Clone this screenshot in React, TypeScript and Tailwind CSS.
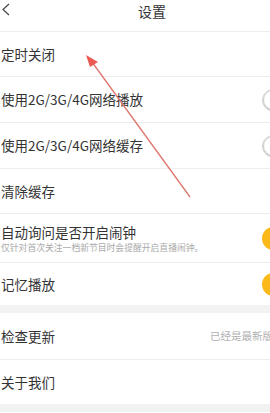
import React from 'react';

const font = { fontFamily: '"Noto Sans CJK SC", "Noto Sans", sans-serif' };

const OffSwitch: React.FC = () => (
  <div className="ml-auto -mr-[38px] flex h-[22px] w-[46px] shrink-0 items-center rounded-full border border-[#d9d9d9] bg-white">
    <div className="h-[20px] w-[20px] rounded-full border border-[#cfcfcf] bg-white shadow-[0_1px_2px_rgba(0,0,0,0.15)]" />
  </div>
);

const OnSwitch: React.FC = () => (
  <div className="ml-auto -mr-[38px] h-[23px] w-[46px] shrink-0 rounded-full bg-[#fbb917]" />
);

const Row: React.FC<{ h: string; children: React.ReactNode }> = ({ h, children }) => (
  <div className={`flex items-center border-b border-[#ededed] pl-[1px] ${h}`}>{children}</div>
);

export default function App() {
  return (
    <div className="relative h-[413px] w-[270px] overflow-hidden bg-white text-[#333]" style={font}>
      <div className="relative flex h-[32px] items-center border-b border-[#ededed]">
        <svg className="absolute left-[1px] top-[3px]" width="10" height="13" viewBox="0 0 10 13">
          <path d="M8 1 L2 6.5 L8 12" fill="none" stroke="#444" strokeWidth="1.2" />
        </svg>
        <div className="absolute left-[138px] top-[1px] text-[14px] leading-[20px] text-[#333]">设置</div>
      </div>

      <Row h="h-[45px]">
        <span className="text-[13.5px]">定时关闭</span>
      </Row>
      <Row h="h-[46px]">
        <span className="text-[13.5px]">使用2G/3G/4G网络播放</span>
        <OffSwitch />
      </Row>
      <Row h="h-[46px]">
        <span className="text-[13.5px]">使用2G/3G/4G网络缓存</span>
        <OffSwitch />
      </Row>
      <Row h="h-[45px]">
        <span className="text-[13.5px]">清除缓存</span>
      </Row>
      <Row h="h-[49px]">
        <div className="flex flex-col">
          <span className="text-[13.5px] leading-[18px]">自动询问是否开启闹钟</span>
          <span className="mt-[1px] text-[8.8px] leading-[12px] text-[#aaa]">仅针对首次关注一档新节目时会提醒开启直播闹钟。</span>
        </div>
        <OnSwitch />
      </Row>
      <div className="flex h-[42px] items-center pl-[1px]">
        <span className="text-[13.5px]">记忆播放</span>
        <OnSwitch />
      </div>
      <div className="h-[8px] bg-[#f2f2f2]" />
      <Row h="h-[47px]">
        <span className="text-[13.5px]">检查更新</span>
        <span className="ml-auto -mr-[3px] whitespace-nowrap text-[10.5px] text-[#b0b0b0]">已经是最新版</span>
      </Row>
      <div className="flex h-[44px] items-center pl-[1px]">
        <span className="text-[13.5px]">关于我们</span>
      </div>
      <div className="h-[8px] bg-[#f2f2f2]" />

      <svg className="pointer-events-none absolute left-0 top-0" width="270" height="413" viewBox="0 0 270 413">
        <line x1="190" y1="197" x2="92" y2="62" stroke="#e0766f" strokeWidth="1.3" />
        <polygon points="86,55 98,62 90,67" fill="#ea5a52" />
      </svg>
    </div>
  );
}
